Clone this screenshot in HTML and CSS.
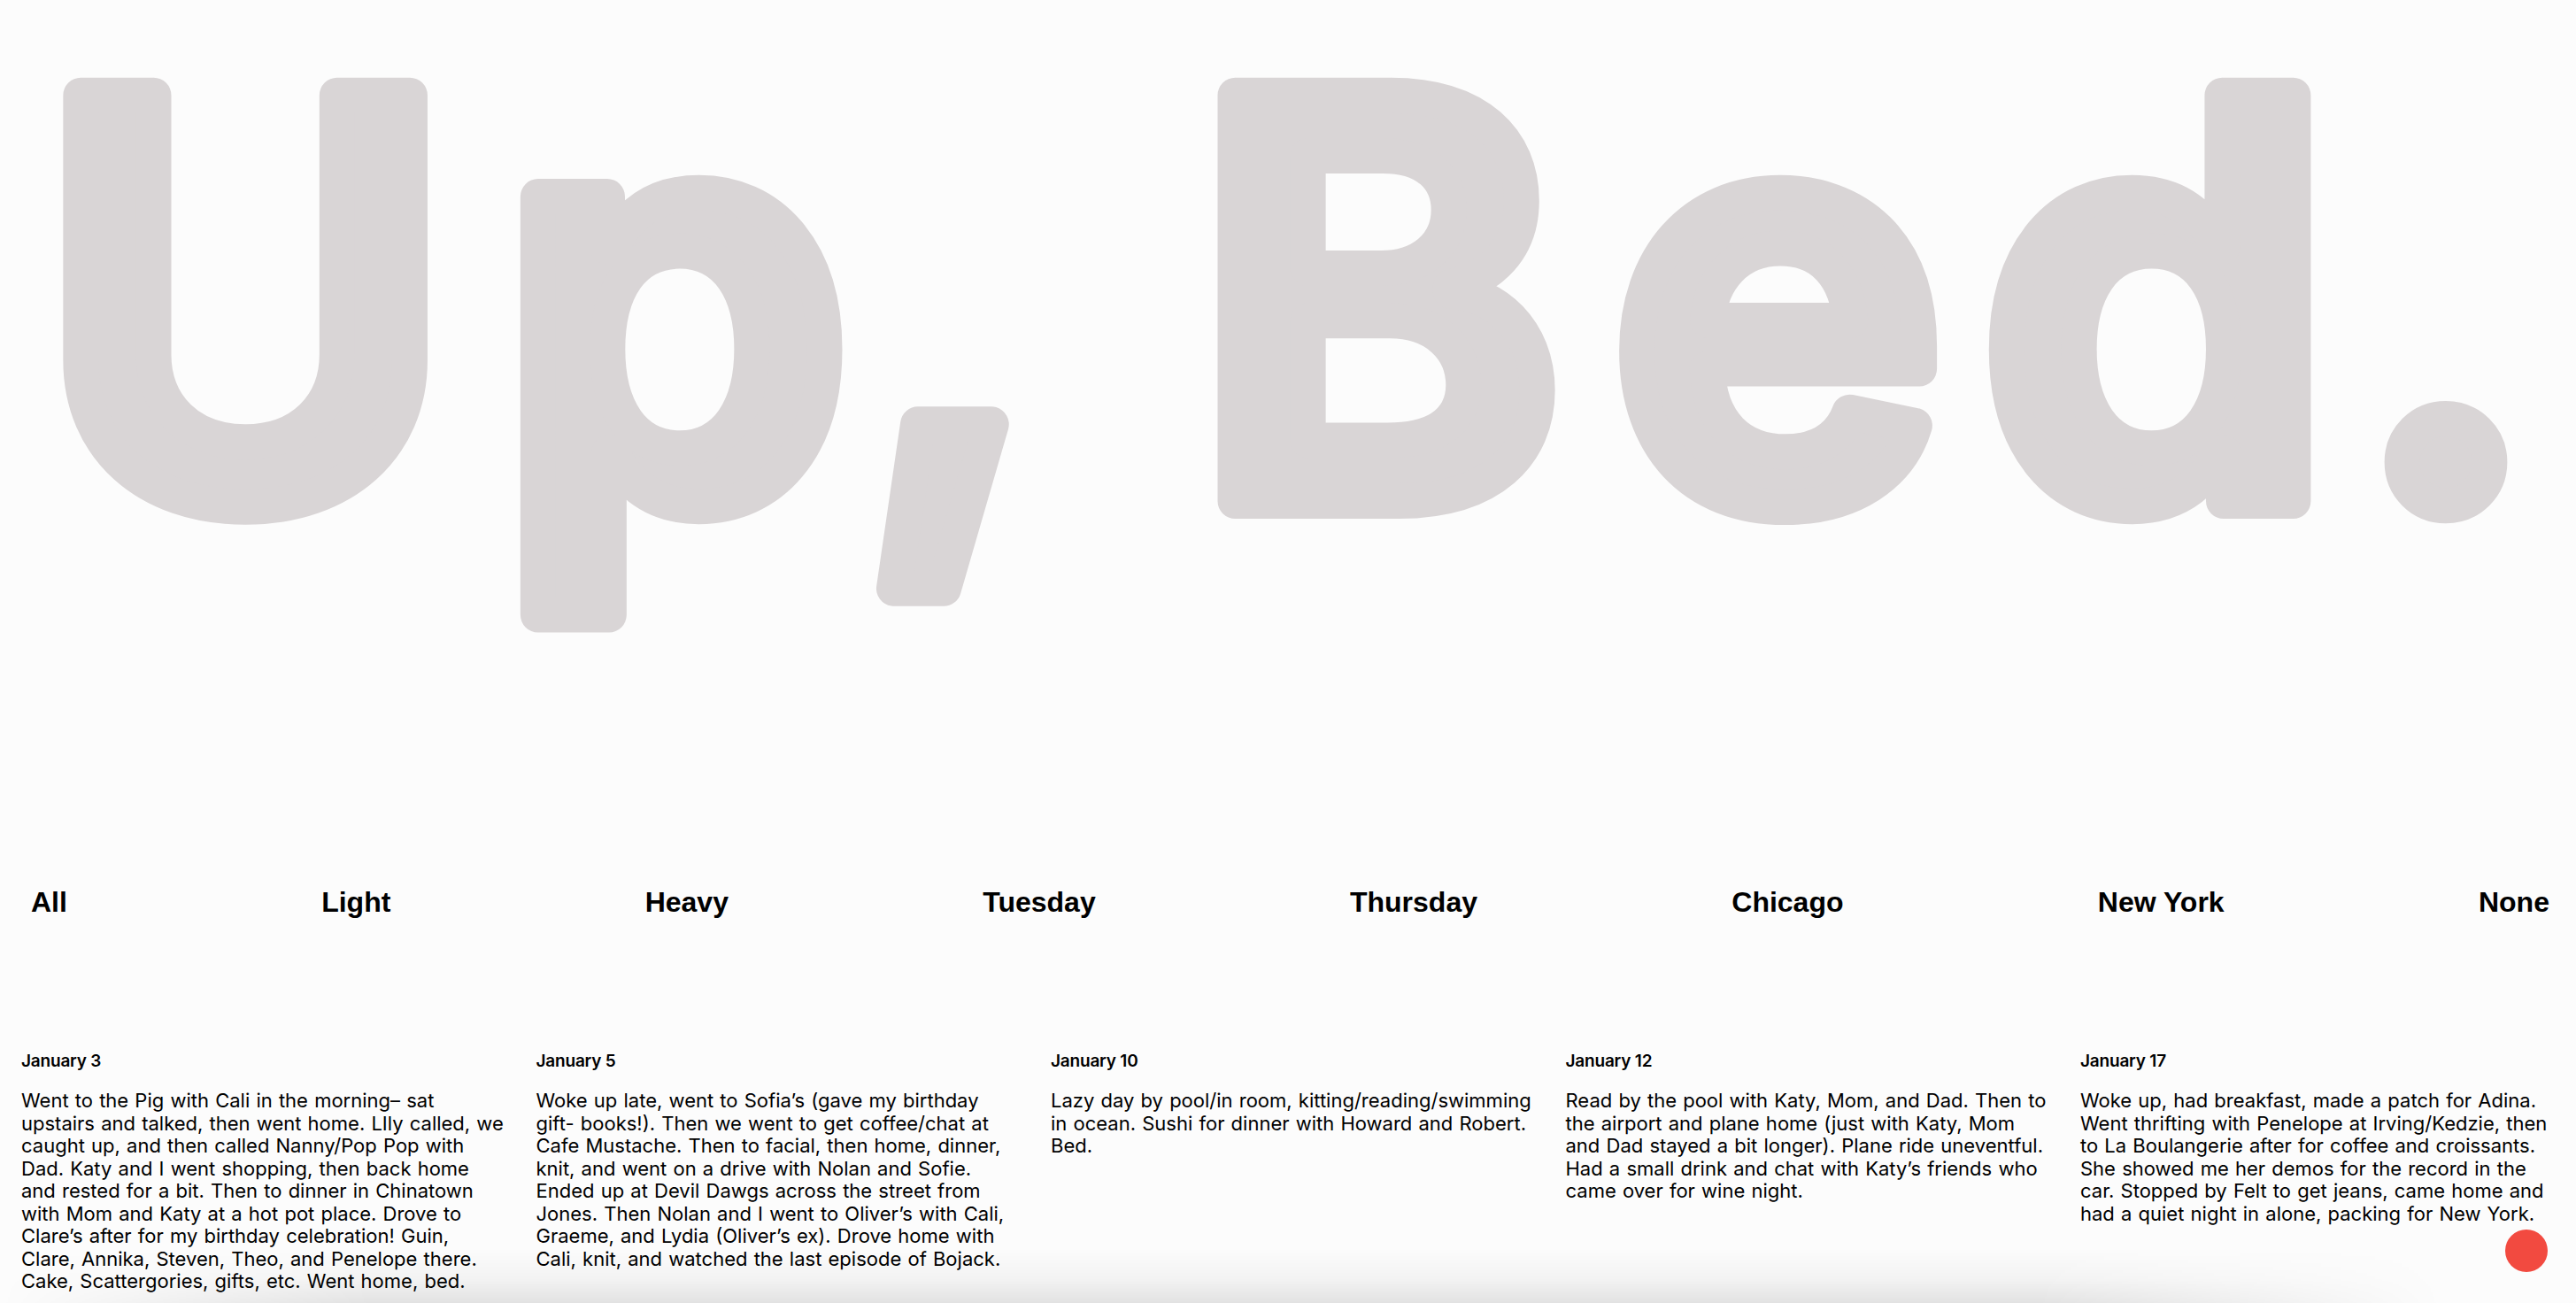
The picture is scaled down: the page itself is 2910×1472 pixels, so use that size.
FILE: index.html
```html
<!DOCTYPE html>
<html lang="en">
<head>
<meta charset="utf-8">
<title>Up, Bed.</title>
<link rel="stylesheet" href="styles.css">
</head>
<body>
<header class="hero">
  <h1 class="hero-title">
    <svg class="hero-svg" viewBox="0 0 2910 780" width="2910" height="780" role="img" aria-label="Up, Bed.">
      <text class="hero-text" y="566"><tspan x="277">U</tspan><tspan x="762">p</tspan><tspan x="1073" y="547">,</tspan><tspan class="hero-space"> </tspan><tspan x="1557" y="566">B</tspan><tspan x="2008">e</tspan><tspan x="2436">d</tspan><tspan x="2763">.</tspan></text>
    </svg>
  </h1>
</header>

<nav class="filters">
  <a class="filter">All</a>
  <a class="filter">Light</a>
  <a class="filter">Heavy</a>
  <a class="filter">Tuesday</a>
  <a class="filter">Thursday</a>
  <a class="filter">Chicago</a>
  <a class="filter">New York</a>
  <a class="filter">None</a>
</nav>

<main class="entries">
  <article class="entry">
    <h2 class="entry-date">January 3</h2>
    <p class="entry-text">Went to the Pig with Cali in the morning– sat upstairs and talked, then went home. LIly called, we caught up, and then called Nanny/Pop Pop with Dad. Katy and I went shopping, then back home and rested for a bit. Then to dinner in Chinatown with Mom and Katy at a hot pot place. Drove to Clare’s after for my birthday celebration! Guin, Clare, Annika, Steven, Theo, and Penelope there. Cake, Scattergories, gifts, etc. Went home, bed.</p>
  </article>
  <article class="entry">
    <h2 class="entry-date">January 5</h2>
    <p class="entry-text">Woke up late, went to Sofia’s (gave my birthday gift- books!). Then we went to get coffee/chat at Cafe Mustache. Then to facial, then home, dinner, knit, and went on a drive with Nolan and Sofie. Ended up at Devil Dawgs across the street from Jones. Then Nolan and I went to Oliver’s with Cali, Graeme, and Lydia (Oliver’s ex). Drove home with Cali, knit, and watched the last episode of Bojack.</p>
  </article>
  <article class="entry">
    <h2 class="entry-date">January 10</h2>
    <p class="entry-text">Lazy day by pool/in room, kitting/reading/swimming in ocean. Sushi for dinner with Howard and Robert. Bed.</p>
  </article>
  <article class="entry">
    <h2 class="entry-date">January 12</h2>
    <p class="entry-text">Read by the pool with Katy, Mom, and Dad. Then to the airport and plane home (just with Katy, Mom and Dad stayed a bit longer). Plane ride uneventful. Had a small drink and chat with Katy’s friends who came over for wine night.</p>
  </article>
  <article class="entry">
    <h2 class="entry-date">January 17</h2>
    <p class="entry-text">Woke up, had breakfast, made a patch for Adina. Went thrifting with Penelope at Irving/Kedzie, then to La Boulangerie after for coffee and croissants. She showed me her demos for the record in the car. Stopped by Felt to get jeans, came home and had a quiet night in alone, packing for New York.</p>
  </article>
</main>

<div class="bottom-fade" aria-hidden="true"></div>
<button class="record-dot" aria-label="Record"></button>
</body>
</html>
```

FILE: styles.css
```css
html, body {
  margin: 0;
  padding: 0;
  overflow: hidden;
}

body {
  width: 2910px;
  height: 1472px;
  background: #fcfcfc;
  color: #000;
  font-family: Inter, "Liberation Sans", sans-serif;
  position: relative;
}

.hero {
  height: 780px;
}

.hero-title {
  margin: 0;
  height: 780px;
}

.hero-svg {
  display: block;
  width: 2910px;
  height: 780px;
  overflow: visible;
}

.hero-text {
  font-family: Inter, "Liberation Sans", sans-serif;
  font-weight: 600;
  font-size: 630px;
  fill: #d9d5d6;
  stroke: #d9d5d6;
  stroke-width: 40px;
  stroke-linejoin: round;
  stroke-linecap: round;
  text-anchor: middle;
}

.hero-space {
  font-size: 1px;
}

.filters {
  display: flex;
  justify-content: space-between;
  align-items: center;
  margin-top: 220px;
  padding: 0 30px 0 35px;
  height: 38px;
}

.filter {
  font-family: "Liberation Sans", Arial, sans-serif;
  font-weight: 700;
  font-size: 32px;
  line-height: 38px;
  color: #000;
  cursor: pointer;
}

.entries {
  display: grid;
  grid-template-columns: repeat(5, 546px);
  column-gap: 35.5px;
  padding: 0 14px 0 24px;
  margin-top: 149px;
}

.entry-date {
  margin: 0;
  font-family: Inter, "Liberation Sans", sans-serif;
  font-weight: 600;
  font-size: 19px;
  line-height: 24px;
  letter-spacing: -0.2px;
}

.entry-text {
  margin: 20px 0 0;
  font-family: Inter, "Liberation Sans", sans-serif;
  font-weight: 400;
  font-size: 22px;
  line-height: 25.5px;
  word-spacing: 1px;
}

.bottom-fade {
  position: absolute;
  left: 0;
  right: 0;
  bottom: 0;
  height: 62px;
  background: linear-gradient(to bottom, rgba(0, 0, 0, 0) 0%, rgba(0, 0, 0, 0.035) 55%, rgba(0, 0, 0, 0.1) 100%);
  -webkit-mask-image: linear-gradient(to right, transparent 0px, #000 420px, #000 2300px, transparent 2760px);
  mask-image: linear-gradient(to right, transparent 0px, #000 420px, #000 2300px, transparent 2760px);
  pointer-events: none;
}

.record-dot {
  position: absolute;
  right: 32px;
  bottom: 35px;
  width: 48px;
  height: 48px;
  border: 0;
  padding: 0;
  border-radius: 50%;
  background: #f24a40;
  cursor: pointer;
}
```
